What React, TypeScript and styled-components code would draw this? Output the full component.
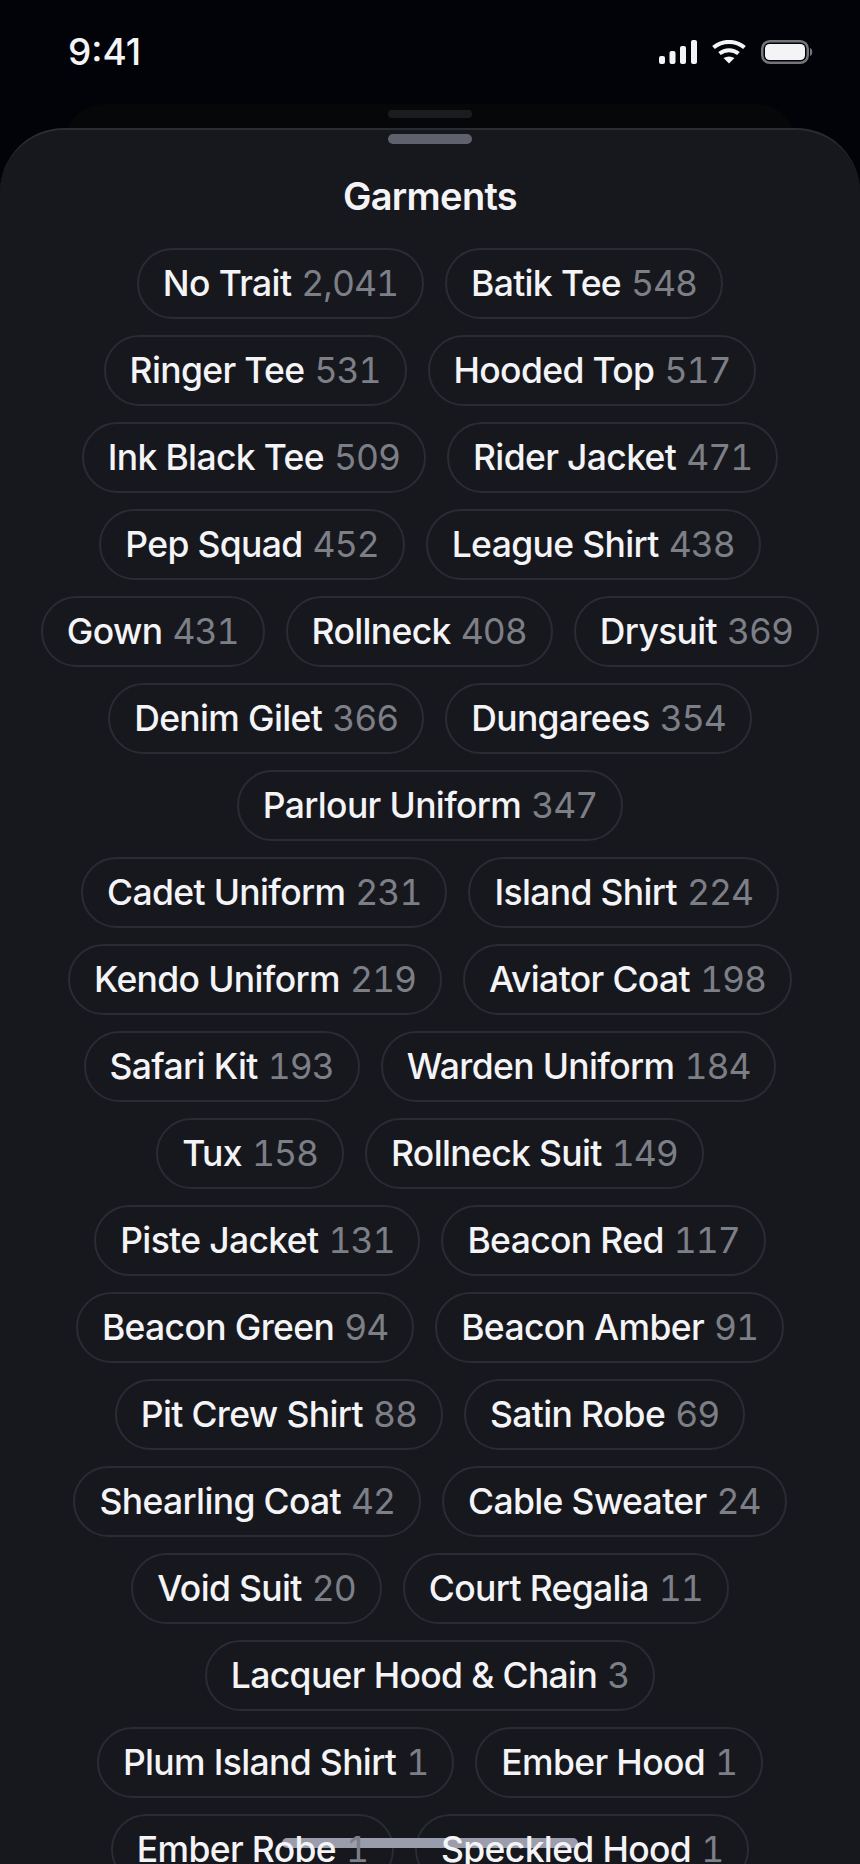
import React from "react";
import styled, { createGlobalStyle } from "styled-components";

const rows: [string, string][][] = [
  [["No Trait", "2,041"], ["Batik Tee", "548"]],
  [["Ringer Tee", "531"], ["Hooded Top", "517"]],
  [["Ink Black Tee", "509"], ["Rider Jacket", "471"]],
  [["Pep Squad", "452"], ["League Shirt", "438"]],
  [["Gown", "431"], ["Rollneck", "408"], ["Drysuit", "369"]],
  [["Denim Gilet", "366"], ["Dungarees", "354"]],
  [["Parlour Uniform", "347"]],
  [["Cadet Uniform", "231"], ["Island Shirt", "224"]],
  [["Kendo Uniform", "219"], ["Aviator Coat", "198"]],
  [["Safari Kit", "193"], ["Warden Uniform", "184"]],
  [["Tux", "158"], ["Rollneck Suit", "149"]],
  [["Piste Jacket", "131"], ["Beacon Red", "117"]],
  [["Beacon Green", "94"], ["Beacon Amber", "91"]],
  [["Pit Crew Shirt", "88"], ["Satin Robe", "69"]],
  [["Shearling Coat", "42"], ["Cable Sweater", "24"]],
  [["Void Suit", "20"], ["Court Regalia", "11"]],
  [["Lacquer Hood & Chain", "3"]],
  [["Plum Island Shirt", "1"], ["Ember Hood", "1"]],
  [["Ember Robe", "1"], ["Speckled Hood", "1"]],
];

const GlobalStyle = createGlobalStyle`
  html, body {
    margin: 0;
    background: #020308;
  }
`;

const Screen = styled.div`
  position: relative;
  width: 860px;
  height: 1864px;
  overflow: hidden;
  background: #020308;
  font-family: Inter, "Liberation Sans", sans-serif;
`;

const StatusBar = styled.div`
  height: 104px;
  padding: 0 47px 0 68px;
  box-sizing: border-box;
  display: flex;
  align-items: flex-start;
  justify-content: space-between;
`;

const Time = styled.div`
  margin-top: 33px;
  font-size: 37px;
  line-height: 38px;
  font-weight: 500;
  color: #f4f4f7;
`;

const StatusIcons = styled.div`
  margin-top: 40px;
  display: flex;
  align-items: center;
  gap: 15px;
`;

const BackSheet = styled.div`
  height: 60px;
  margin: 0 64px -36px;
  padding-top: 6px;
  box-sizing: border-box;
  border-radius: 40px 40px 0 0;
  background: #060709;
  display: flex;
  justify-content: center;
`;

const BackHandle = styled.div`
  width: 84px;
  height: 8px;
  border-radius: 4px;
  background: #1b1c20;
`;

const Sheet = styled.div`
  position: relative;
  height: 1736px;
  box-sizing: border-box;
  padding-top: 4px;
  background: #17181e;
  border-top: 2px solid #2b2d33;
  border-radius: 64px 64px 0 0;
  display: flex;
  flex-direction: column;
  align-items: center;
`;

const Handle = styled.div`
  flex-shrink: 0;
  width: 84px;
  height: 10px;
  border-radius: 5px;
  background: #5f626d;
`;

const Title = styled.h1`
  flex-shrink: 0;
  margin: 30px 0 0;
  font-size: 38px;
  line-height: 44px;
  letter-spacing: -0.7px;
  font-weight: 600;
  color: #f4f4f7;
`;

const List = styled.div`
  flex-shrink: 0;
  margin-top: 30px;
  display: flex;
  flex-direction: column;
  gap: 16px;
`;

const Row = styled.div`
  display: flex;
  justify-content: center;
  gap: 21px;
`;

const Pill = styled.div`
  height: 71px;
  box-sizing: border-box;
  padding: 0 24px;
  display: flex;
  align-items: center;
  gap: 10px;
  border: 2px solid #2a2c33;
  border-radius: 36px;
  font-size: 35.5px;
  font-weight: 500;
  white-space: nowrap;
`;

const Name = styled.span`
  position: relative;
  z-index: 2;
  letter-spacing: -0.65px;
  color: #f4f4f7;
`;

const Count = styled.span`
  position: relative;
  z-index: 2;
  letter-spacing: -1px;
  font-weight: 400;
  font-variant-numeric: tabular-nums;
  color: #7d7f87;
`;

const HomeBar = styled.div`
  position: absolute;
  left: 282px;
  bottom: 16px;
  z-index: 1;
  width: 296px;
  height: 10px;
  border-radius: 5px;
  background: #9a9dac;
`;

function StatusGlyphs() {
  return (
    <StatusIcons>
      <svg width="38" height="24" viewBox="0 0 38 24" fill="#f4f4f7">
        <rect x="0" y="16" width="6" height="8" rx="2" />
        <rect x="10.5" y="11" width="6" height="13" rx="2" />
        <rect x="21" y="6" width="6" height="18" rx="2" />
        <rect x="32" y="0" width="6" height="24" rx="2" />
      </svg>
      <svg width="34" height="24" viewBox="0 0 34 24" fill="none" stroke="#f4f4f7" strokeWidth="4">
        <path d="M1.5 7.5C10 0 24 0 32.5 7.5" />
        <path d="M7.5 13.5C13 9 21 9 26.5 13.5" />
        <path d="M11.5 18L17 23.5L22.5 18C19 16 15 16 11.5 18Z" fill="#f4f4f7" stroke="none" />
      </svg>
      <svg width="52" height="24" viewBox="0 0 52 24" fill="none">
        <rect x="1.25" y="1.25" width="45.5" height="21.5" rx="7.5" stroke="#74767c" strokeWidth="2.5" />
        <rect x="4" y="4" width="40" height="16" rx="4.5" fill="#f4f4f7" />
        <path d="M49 8C52 9 52 15 49 16Z" fill="#74767c" />
      </svg>
    </StatusIcons>
  );
}

export default function App() {
  return (
    <Screen>
      <GlobalStyle />
      <StatusBar>
        <Time>9:41</Time>
        <StatusGlyphs />
      </StatusBar>
      <BackSheet>
        <BackHandle />
      </BackSheet>
      <Sheet>
        <Handle />
        <Title>Garments</Title>
        <List>
          {rows.map((row, i) => (
            <Row key={i}>
              {row.map(([name, count]) => (
                <Pill key={name}>
                  <Name>{name}</Name>
                  <Count>{count}</Count>
                </Pill>
              ))}
            </Row>
          ))}
        </List>
        <HomeBar />
      </Sheet>
    </Screen>
  );
}
